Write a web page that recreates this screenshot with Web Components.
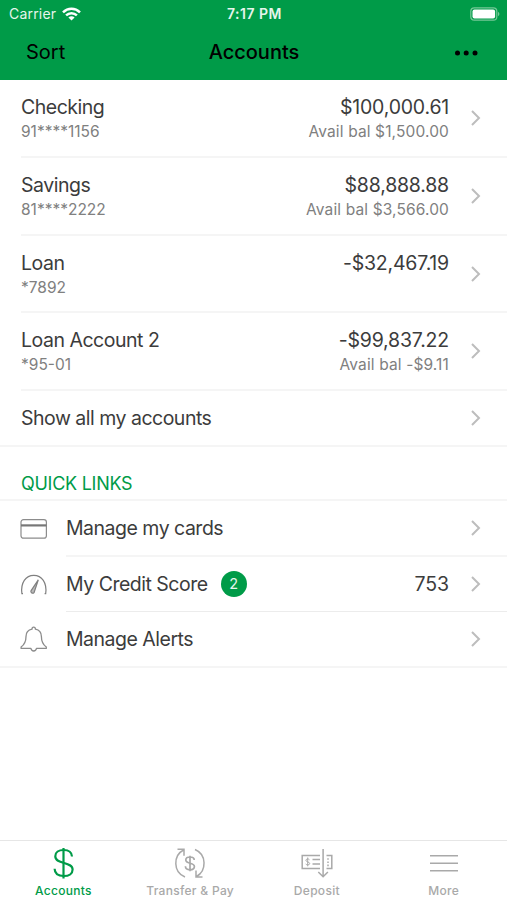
<!DOCTYPE html>
<html lang="en">
<head>
<meta charset="utf-8">
<meta name="viewport" content="width=device-width, initial-scale=1">
<title>Accounts</title>
<style>
:root {
	--primary: #009b48;
	--dark: #3c3c3c;
	--muted: #808080;
	--line: #f5f5f5;
	--inactive: #a9a9a9;
}
body {
	margin: 0;
	background: #fff;
	color: var(--dark);
	font-family: Inter, "Liberation Sans", sans-serif;
}
</style>
</head>
<body>
<bank-app>
	<app-header slot="header" carrier="Carrier" time="7:17 PM" action="Sort">Accounts</app-header>
	<account-row name="Checking" number="91****1156" balance="$100,000.61" available="Avail bal $1,500.00"></account-row>
	<account-row name="Savings" number="81****2222" balance="$88,888.88" available="Avail bal $3,566.00"></account-row>
	<account-row name="Loan" number="*7892" balance="-$32,467.19" style="--row: 77px"></account-row>
	<account-row name="Loan Account 2" number="*95-01" balance="-$99,837.22" available="Avail bal -$9.11"></account-row>
	<link-row last class="all">Show all my accounts</link-row>
	<section-title>QUICK LINKS</section-title>
	<link-row icon="card">Manage my cards</link-row>
	<link-row icon="gauge" badge="2" value="753" thin style="--row: 55px">My Credit Score</link-row>
	<link-row icon="bell" last>Manage Alerts</link-row>
	<tab-bar slot="footer">
		<tab-item icon="dollar" active>Accounts</tab-item>
		<tab-item icon="transfer">Transfer &amp; Pay</tab-item>
		<tab-item icon="deposit">Deposit</tab-item>
		<tab-item icon="more">More</tab-item>
	</tab-bar>
</bank-app>

<script>
const icons = {
	card: `<svg width="28" height="28" viewBox="0 0 28 28" fill="none" stroke="#8c8c8c" stroke-width="1.2"><rect x="1" y="4.6" width="25.4" height="18.6" rx="2.5"/><path d="M1 10.4h25.4" stroke-width="2.2" stroke="#777"/></svg>`,
	gauge: `<svg width="28" height="28" viewBox="0 0 28 28" fill="none" stroke="#808080" stroke-width="1.2"><path d="M3 22.6H1.900C.4 11.700 5.800 4.300 13.800 4.300S27.200 11.700 25.700 22.600h-1.100"/><path d="M18.300 8.800 11.100 19.600c-1 2 1.700 3.600 3.100 1.700z" fill="#bbb"/></svg>`,
	bell: `<svg width="28" height="28" viewBox="0 0 28 28" fill="none" stroke="#8c8c8c" stroke-width="1.3" stroke-linejoin="round"><path d="M13.700 2.200c-1.300 0-1.700.8-1.700 2-4 .8-6 3.700-6 7.300 0 5.700-1.400 8-4.900 10.600v1.300h9.800c.3 1.500 1.300 2.600 2.800 2.600s2.500-1.100 2.800-2.600h9.800v-1.300c-3.500-2.600-4.900-4.900-4.900-10.600 0-3.600-2-6.500-6-7.300 0-1.200-.4-2-1.700-2z"/></svg>`,
	dollar: `<svg width="34" height="34" viewBox="0 0 34 34" fill="none" stroke="currentColor" stroke-width="2.2"><path d="M17.500 2v30.500"/><path d="M26 10.500c-.3-4.200-3.300-6.500-8.300-6.500s-8.400 2.400-8.400 6.200c0 8.500 17.300 5 17.300 13.200 0 4.200-3.600 6.600-8.800 6.600-5.500 0-9-2.600-9.200-7.300"/></svg>`,
	transfer: `<svg width="34" height="34" viewBox="0 0 34 34" fill="none" stroke="currentColor" stroke-width="1.5"><path d="M12 31C-.2 26 .2 9.500 10.500 4M4.500 3.300h6.500v6.500M22 3.500c12 5 11.600 21.500 1.500 27M29.500 31H23v-6.500"/><path d="M17 9.800v15.400M21.200 13.900c0-1.900-1.600-2.900-4.200-2.900s-4.200 1.100-4.200 3c0 4.200 8.600 2.300 8.600 6.500 0 2.100-1.700 3.300-4.400 3.300s-4.500-1.200-4.600-3.500" stroke-width="1.700"/></svg>`,
	deposit: `<svg width="34" height="34" viewBox="0 0 34 34" fill="none" stroke="currentColor" stroke-width="1.5"><path d="M20 9.500H2.200v13H20M26.500 9.500h5.300v13h-5.300M23.100 3v27M18.300 26l4.800 4.800 4.800-4.800"/><path d="M12.500 13.500H20M12.500 18H20"/><path d="M28 12.200v8.400" stroke-dasharray="1.600 1.600"/><path d="M7.700 11.500v8.800M9.500 13.800c-.8-1.200-3.600-1-3.600.5 0 1.900 3.800 1.300 3.800 3.300 0 1.500-3 1.800-4 .4" stroke-width="1"/></svg>`,
	more: `<svg width="34" height="34" viewBox="0 0 34 34" fill="none" stroke="currentColor" stroke-width="1.6"><path d="M3 9.700h28M3 17.300h28M3 24.700h28"/></svg>`,
	chevron: `<svg width="10" height="16" viewBox="0 0 10 16" fill="none" stroke="#bdbdbd" stroke-width="2"><path d="M1 1l7 7-7 7"/></svg>`,
};

class BankApp extends HTMLElement {
	constructor() {
		super();
		this.attachShadow({ mode: 'open' }).innerHTML = `
		<style>
		:host {
			display: flex;
			flex-direction: column;
			height: 900px;
			overflow: hidden;
		}
		main {
			flex: 1;
			min-height: 0;
		}
		</style>
		<slot name="header"></slot>
		<main><slot></slot></main>
		<slot name="footer"></slot>`;
	}
}

class AppHeader extends HTMLElement {
	constructor() {
		super();
		this.attachShadow({ mode: 'open' });
	}

	connectedCallback() {
		this.shadowRoot.innerHTML = `
		<style>
		:host {
			display: block;
			height: 80px;
			background: var(--primary);
			color: #000;
		}
		.status, .nav {
			display: grid;
			grid-template-columns: 1fr auto 1fr;
			align-items: center;
		}
		.status {
			height: 27px;
			padding: 0 7px 0 9px;
			color: #e6f5ec;
			font-size: 14px;
			line-height: 27px;
		}
		.carrier {
			display: flex;
			align-items: center;
			gap: 6px;
			letter-spacing: .2px;
		}
		.time {
			font-size: 14px;
			font-weight: 600;
			letter-spacing: .5px;
		}
		.status > svg, .nav > svg {
			justify-self: end;
		}
		.nav {
			height: 51px;
			padding: 0 29px 0 30px;
			font-size: 20px;
			line-height: 51px;
		}
		.nav > span {
			margin-left: -4px;
		}
		h1 {
			margin: 0;
			font-size: 20px;
			font-weight: 500;
		}
		</style>
		<div class="status">
			<div class="carrier"><span>${this.getAttribute('carrier')}</span>
				<svg width="19" height="14" viewBox="0 0 19 14" fill="none" stroke="#fff" stroke-width="2.5"><path d="M1 5.300c4.800-4.600 12.200-4.600 17 0M4.100 8.400c3-2.900 7.800-2.900 10.800 0"/><path d="M9.500 13.500 6.400 10.400c1.700-1.600 4.500-1.600 6.200 0z" fill="#fff" stroke="none"/></svg>
			</div>
			<span class="time">${this.getAttribute('time')}</span>
			<svg width="30" height="14" viewBox="0 0 30 14"><rect x=".8" y=".8" width="26" height="12.400" rx="3.500" fill="none" stroke="#75c897" stroke-width="1.2"/><rect x="2.500" y="2.500" width="22.600" height="9" rx="2" fill="#fff"/><path d="M28 4.800c1.900.8 1.900 3.600 0 4.400z" fill="#75c897"/></svg>
		</div>
		<div class="nav">
			<span>${this.getAttribute('action')}</span>
			<h1><slot></slot></h1>
			<svg width="24" height="6" viewBox="0 0 24 6"><circle cx="3.500" cy="3" r="2.500"/><circle cx="12.200" cy="3" r="2.500"/><circle cx="21" cy="3" r="2.500"/></svg>
		</div>`;
	}
}

class AccountRow extends HTMLElement {
	constructor() {
		super();
		this.attachShadow({ mode: 'open' });
	}

	connectedCallback() {
		this.shadowRoot.innerHTML = `
		<style>
		:host {
			display: block;
			box-sizing: border-box;
			height: var(--row, 78px);
			padding-left: 21px;
		}
		.row {
			display: flex;
			box-sizing: border-box;
			height: 100%;
			padding: 15px 26px 0 0;
			border-bottom: 2px solid var(--line);
		}
		.info {
			flex: 1;
		}
		.amount {
			text-align: right;
		}
		p {
			margin: 0;
			font-size: 19.5px;
			line-height: 25px;
			letter-spacing: -.48px;
		}
		.amount p {
			letter-spacing: -.2px;
		}
		small {
			display: block;
			color: var(--muted);
			font-size: 15.5px;
			line-height: 23px;
		}
		.amount small {
			letter-spacing: .13px;
		}
		svg {
			margin: 15px 0 0 22px;
		}
		</style>
		<div class="row">
			<div class="info">
				<p>${this.getAttribute('name')}</p>
				<small>${this.getAttribute('number')}</small>
			</div>
			<div class="amount">
				<p>${this.getAttribute('balance')}</p>
				<small>${this.getAttribute('available') || ''}</small>
			</div>
			${icons.chevron}
		</div>`;
	}
}

class LinkRow extends HTMLElement {
	constructor() {
		super();
		this.attachShadow({ mode: 'open' });
	}

	connectedCallback() {
		const icon = this.getAttribute('icon');
		const badge = this.getAttribute('badge');
		this.shadowRoot.innerHTML = `
		<style>
		:host {
			display: flex;
			box-sizing: border-box;
			height: var(--row, 56px);
			padding-left: 20px;
		}
		:host(.all) {
			padding-left: 21px;
		}
		:host([last]) {
			border-bottom: 2px solid var(--line);
		}
		.icon {
			display: flex;
			align-items: center;
			width: 46px;
		}
		.row {
			display: flex;
			flex: 1;
			align-items: center;
			padding-right: 26px;
			border-bottom: 2px solid var(--line);
			font-size: 19.5px;
			line-height: 25px;
		}
		:host([thin]) .row {
			border-bottom: 1px solid #ececec;
		}
		:host([last]) .row {
			border: 0;
		}
		.label {
			padding-top: 1px;
			letter-spacing: -.5px;
		}
		.badge {
			width: 26px;
			height: 26px;
			margin-left: 13px;
			border-radius: 50%;
			background: var(--primary);
			color: #e6f5ec;
			font-size: 14.5px;
			line-height: 26px;
			text-align: center;
		}
		.value {
			margin-left: auto;
			margin-right: 22px;
			letter-spacing: -.1px;
		}
		</style>
		${icon ? `<div class="icon">${icons[icon]}</div>` : ''}
		<div class="row">
			<span class="label"><slot></slot></span>
			${badge ? `<span class="badge">${badge}</span>` : ''}
			<span class="value">${this.getAttribute('value') || ''}</span>
			${icons.chevron}
		</div>`;
	}
}

class SectionTitle extends HTMLElement {
	constructor() {
		super();
		this.attachShadow({ mode: 'open' }).innerHTML = `
		<style>
		:host {
			display: block;
			box-sizing: border-box;
			height: 54px;
			padding: 24px 0 0 21px;
			border-bottom: 2px solid var(--line);
			color: var(--primary);
			font-size: 18px;
			line-height: 25px;
			letter-spacing: -.27px;
		}
		</style>
		<slot></slot>`;
	}
}

class TabBar extends HTMLElement {
	constructor() {
		super();
		this.attachShadow({ mode: 'open' }).innerHTML = `
		<style>
		:host {
			display: grid;
			grid-template-columns: repeat(4, 1fr);
			box-sizing: border-box;
			height: 60px;
			border-top: 1px solid #e6e6e6;
		}
		</style>
		<slot></slot>`;
	}
}

class TabItem extends HTMLElement {
	constructor() {
		super();
		this.attachShadow({ mode: 'open' });
	}

	connectedCallback() {
		this.shadowRoot.innerHTML = `
		<style>
		:host {
			display: flex;
			flex-direction: column;
			align-items: center;
			padding-top: 5px;
			color: var(--inactive);
			font-size: 12px;
			font-weight: 500;
			line-height: 15px;
			letter-spacing: .3px;
			white-space: nowrap;
		}
		:host([active]) {
			color: var(--primary);
		}
		span {
			margin-top: 3px;
		}
		</style>
		${icons[this.getAttribute('icon')]}
		<span><slot></slot></span>`;
	}
}

customElements.define('bank-app', BankApp);
customElements.define('app-header', AppHeader);
customElements.define('account-row', AccountRow);
customElements.define('link-row', LinkRow);
customElements.define('section-title', SectionTitle);
customElements.define('tab-bar', TabBar);
customElements.define('tab-item', TabItem);
</script>
</body>
</html>
